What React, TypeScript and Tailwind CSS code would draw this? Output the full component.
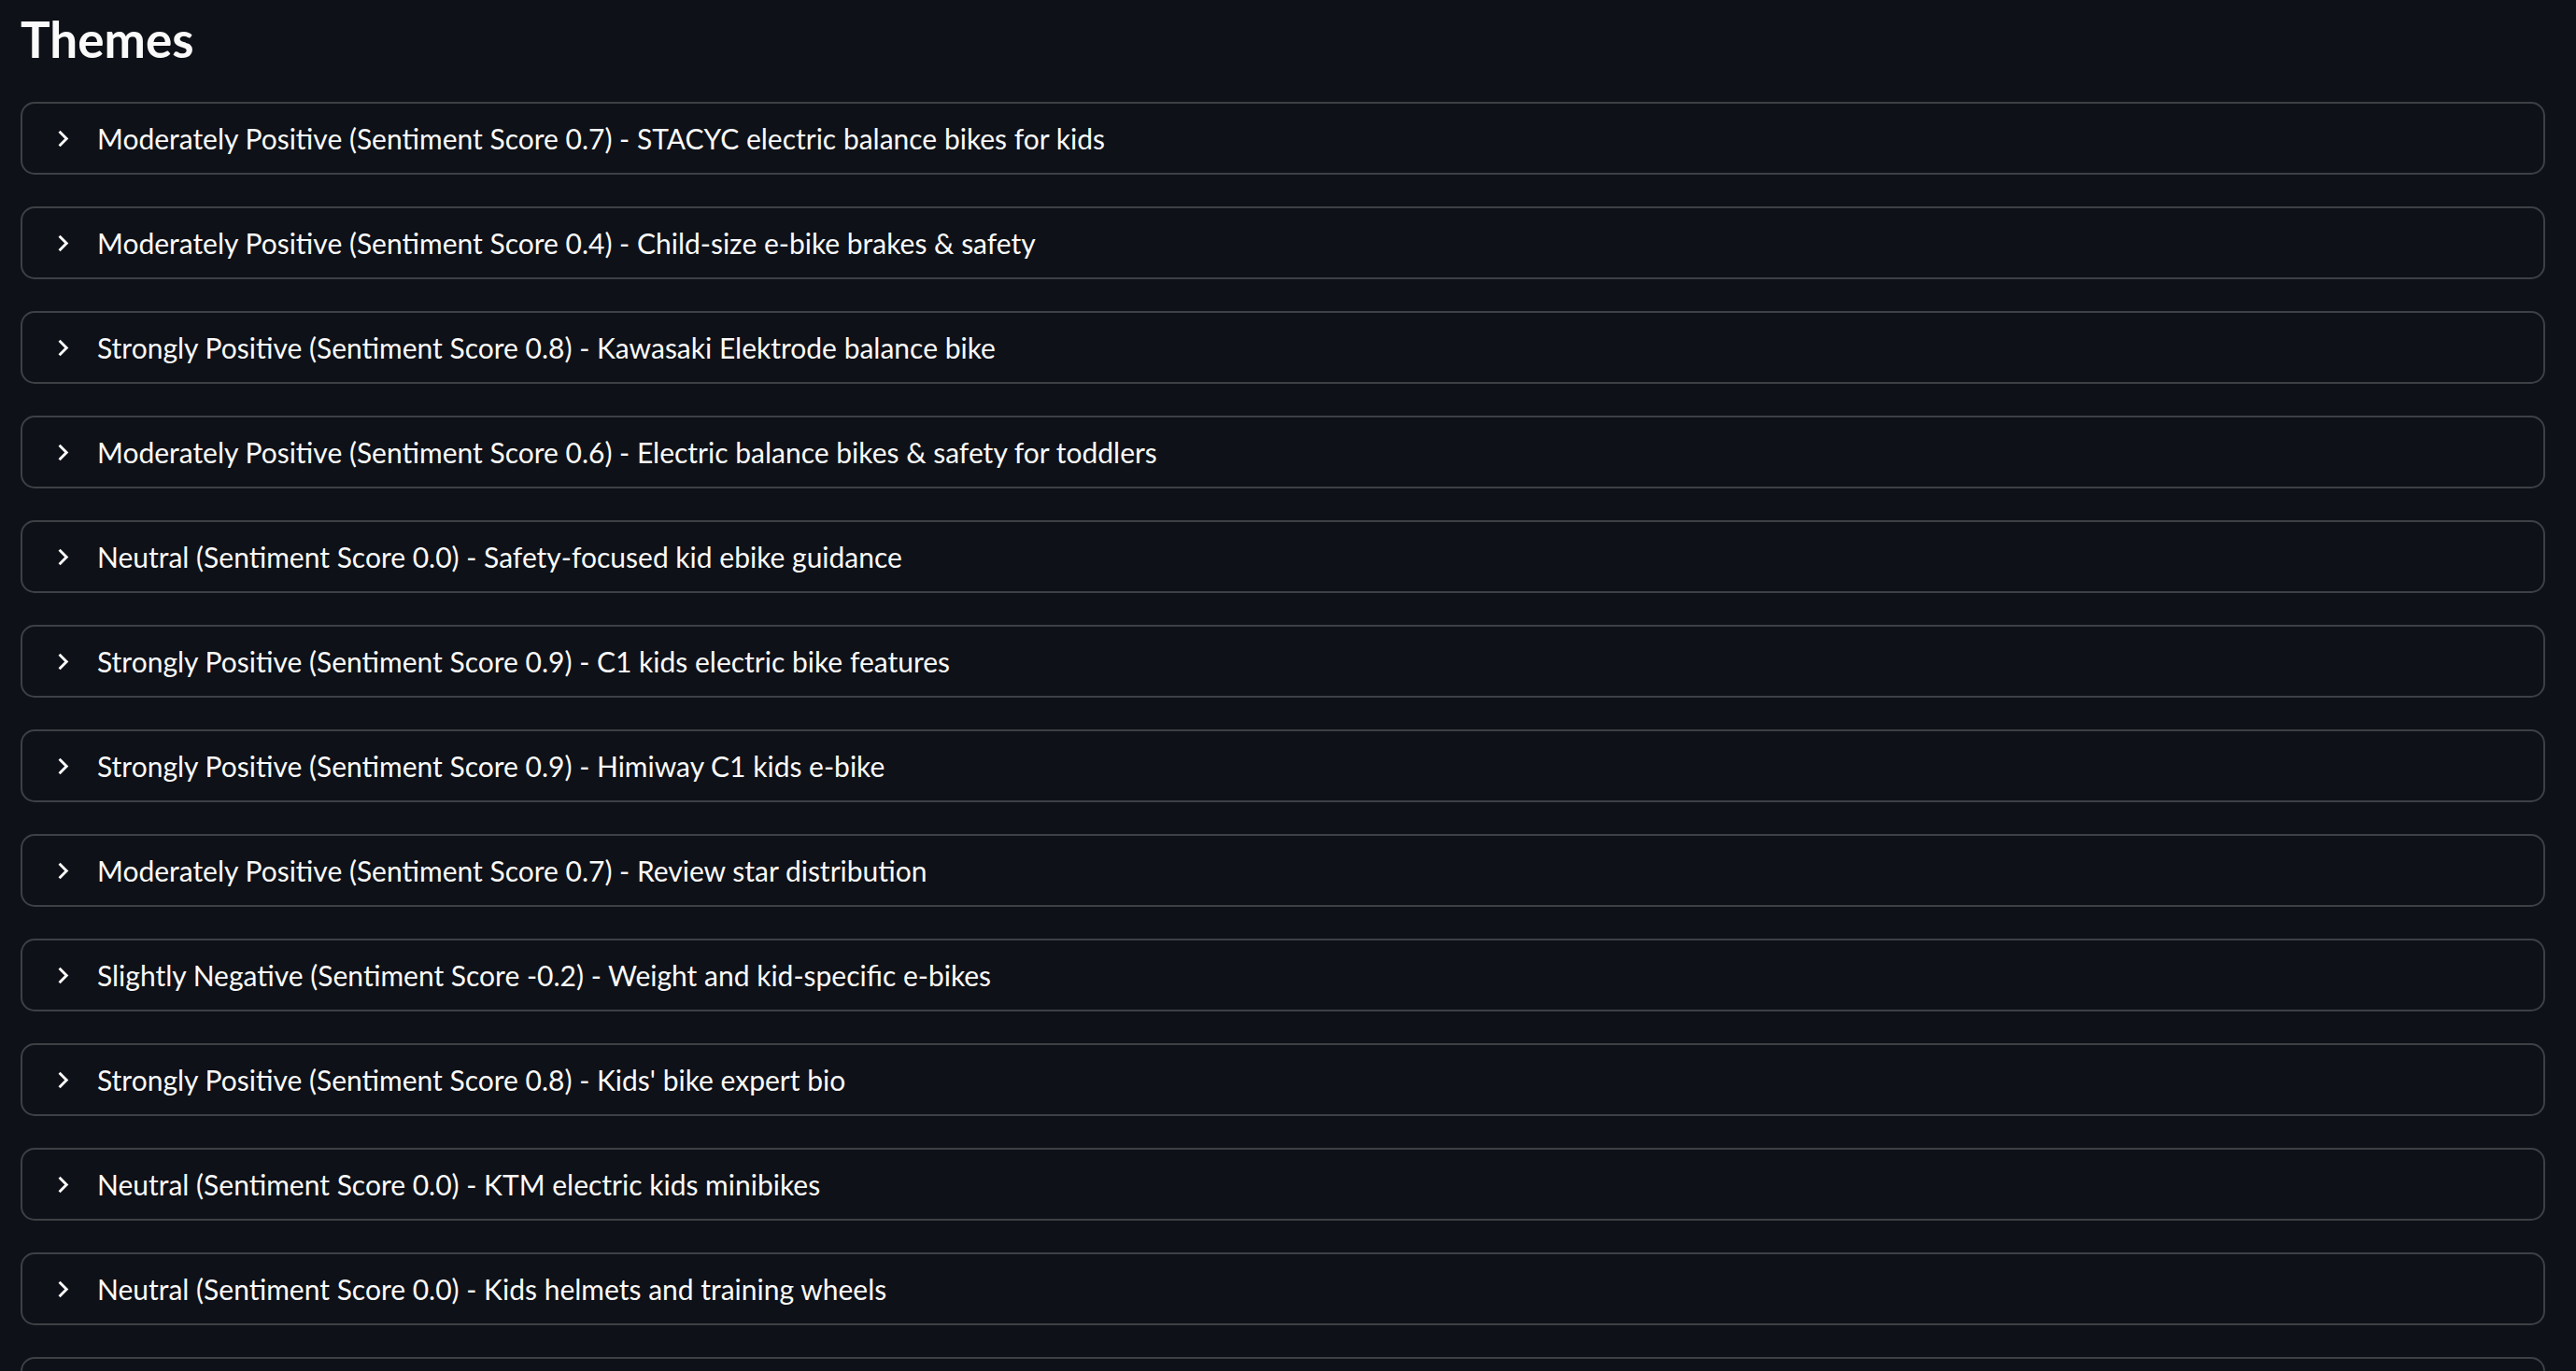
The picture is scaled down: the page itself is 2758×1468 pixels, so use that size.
import React from "react";

// Theme rows shown in the collapsed expander list
const themes = [
  "Moderately Positive (Sentiment Score 0.7) - STACYC electric balance bikes for kids",
  "Moderately Positive (Sentiment Score 0.4) - Child-size e-bike brakes & safety",
  "Strongly Positive (Sentiment Score 0.8) - Kawasaki Elektrode balance bike",
  "Moderately Positive (Sentiment Score 0.6) - Electric balance bikes & safety for toddlers",
  "Neutral (Sentiment Score 0.0) - Safety-focused kid ebike guidance",
  "Strongly Positive (Sentiment Score 0.9) - C1 kids electric bike features",
  "Strongly Positive (Sentiment Score 0.9) - Himiway C1 kids e-bike",
  "Moderately Positive (Sentiment Score 0.7) - Review star distribution",
  "Slightly Negative (Sentiment Score -0.2) - Weight and kid-specific e-bikes",
  "Strongly Positive (Sentiment Score 0.8) - Kids' bike expert bio",
  "Neutral (Sentiment Score 0.0) - KTM electric kids minibikes",
  "Neutral (Sentiment Score 0.0) - Kids helmets and training wheels",
  "Moderately Positive (Sentiment Score 0.5) - Kids e-bike battery range",
];

function Chevron() {
  return (
    <svg viewBox="0 0 24 24" className="h-[35px] w-[35px] shrink-0" fill="#fafafa">
      <path d="M8.59 16.59L13.17 12 8.59 7.41 10 6l6 6-6 6-1.41-1.41z" />
    </svg>
  );
}

function ThemeRow({ label }: { label: string }) {
  return (
    <div className="flex h-[78px] shrink-0 items-center rounded-[15px] border-2 border-[#3d4045] pl-[26px]">
      <Chevron />
      <span className="ml-[19px] whitespace-nowrap text-[30px] text-[#fafafa]">{label}</span>
    </div>
  );
}

export default function App() {
  return (
    <div
      className="h-screen overflow-hidden bg-[#0e1117] pl-[22px] pr-[33px] pt-[10px] text-[#fafafa]"
      style={{ fontFamily: "Lato, 'Noto Sans', sans-serif" }}
    >
      <h3 className="h-[64px] text-[53px] font-bold leading-[64px]">Themes</h3>
      <div className="mt-[35px] flex flex-col gap-[34px]">
        {themes.map((t) => (
          <ThemeRow key={t} label={t} />
        ))}
      </div>
    </div>
  );
}
